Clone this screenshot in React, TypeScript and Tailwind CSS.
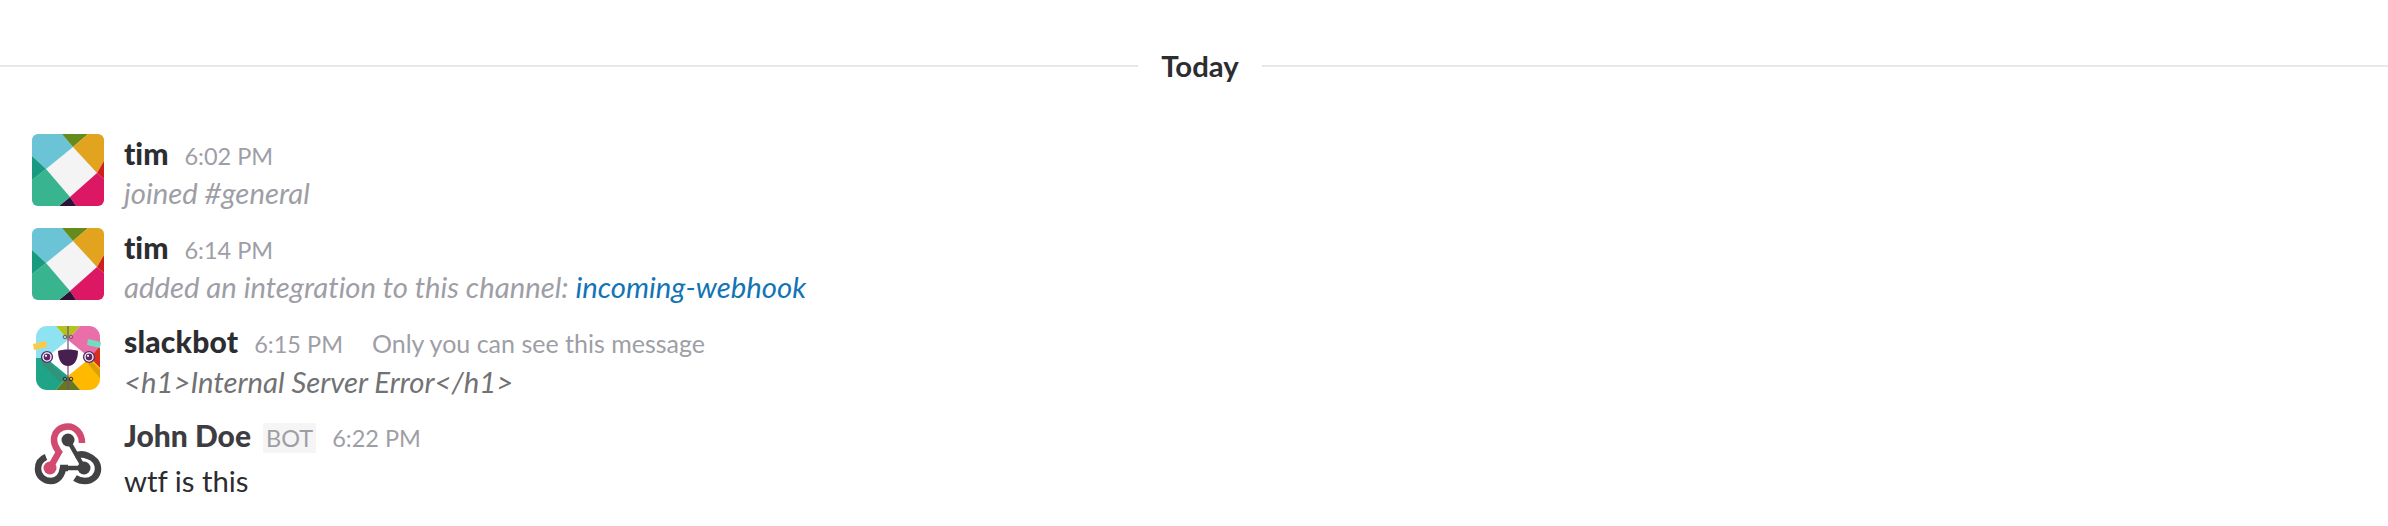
const SOFT_INK = "text-[#2c2d30]";

function TimAvatar() {
  return (
    <svg width="72" height="72" viewBox="0 0 72 72" className="block rounded-[6px]">
      <rect width="72" height="72" fill="#f4f4f5" />
      <polygon points="0,0 30,0 41,13 14,35 0,22" fill="#6ac4d6" />
      <polygon points="30,0 56,0 41,13" fill="#648b1c" />
      <polygon points="56,0 72,0 72,27 65,39 41,13" fill="#e2a41f" />
      <polygon points="72,27 65,39 72,45" fill="#cf1e1e" />
      <polygon points="65,39 72,45 72,72 44,72 38,63" fill="#dc1763" />
      <polygon points="38,63 44,72 27,72" fill="#2d1137" />
      <polygon points="14,35 38,63 27,72 0,72 0,46" fill="#38b48e" />
      <polygon points="0,22 14,35 0,46" fill="#189a80" />
    </svg>
  );
}

function SlackbotAvatar() {
  return (
    <svg width="72" height="72" viewBox="0 0 72 72" className="block">
      <defs>
        <clipPath id="sb">
          <rect x="4" y="4" width="64" height="64" rx="11" />
        </clipPath>
      </defs>
      <g clipPath="url(#sb)">
        <rect x="4" y="4" width="64" height="64" fill="#ffffff" />
        <polygon points="4,4 24,4 36,18 14,36 4,36" fill="#8de3f2" />
        <polygon points="24,4 48,4 36,18" fill="#b2c31c" />
        <polygon points="48,4 68,4 68,26 58,36 36,18" fill="#ea6fa8" />
        <polygon points="68,24 58,36 68,46" fill="#d9301e" />
        <polygon points="58,36 68,46 68,68 48,68 36,54" fill="#ffb900" />
        <polygon points="36,54 48,68 24,68" fill="#67781f" />
        <polygon points="14,36 36,54 24,68 4,68 4,36" fill="#1fa487" />
        <polygon points="14,38 34,56 28,60 10,42" fill="#4a7f6c" opacity="0.45" />
        <polygon points="58,38 68,48 68,56 56,42" fill="#a37a14" opacity="0.4" />
      </g>
      <rect x="35.4" y="4" width="1.2" height="64" fill="#7a4a86" />
      <circle cx="33" cy="15" r="1.8" fill="none" stroke="#7a4a86" strokeWidth="1" />
      <circle cx="39" cy="15" r="1.8" fill="none" stroke="#7a4a86" strokeWidth="1" />
      <circle cx="33" cy="57" r="1.8" fill="none" stroke="#2f2a44" strokeWidth="1" />
      <circle cx="39" cy="57" r="1.8" fill="none" stroke="#2f2a44" strokeWidth="1" />
      <path d="M26 29 C31 27 41 27 46 29 C46 38 42 44 36 44 C30 44 26 38 26 29 Z" fill="#47204f" />
      <circle cx="15" cy="35" r="5.4" fill="#ffffff" stroke="#5a2a66" strokeWidth="1.4" />
      <circle cx="15" cy="35" r="3.4" fill="#5a2a66" />
      <circle cx="14" cy="33.8" r="1.1" fill="#ffffff" />
      <circle cx="57" cy="35" r="5.4" fill="#ffffff" stroke="#5a2a66" strokeWidth="1.4" />
      <circle cx="57" cy="35" r="3.4" fill="#5a2a66" />
      <circle cx="56" cy="33.8" r="1.1" fill="#ffffff" />
      <polygon points="1,22 14,19 15,25 2,28" fill="#fdc94a" />
      <polygon points="56,17 69,20 68,26 55,23" fill="#72dcc0" />
    </svg>
  );
}

function WebhookAvatar() {
  return (
    <svg width="72" height="72" viewBox="0 0 72 72" className="block" fill="none">
      <path d="M36 24 L52 52" stroke="#424245" strokeWidth="4.5" />
      <path d="M30 52 L52 52" stroke="#424245" strokeWidth="4.5" />
      <circle cx="36" cy="24" r="6.5" fill="#424245" />
      <circle cx="52" cy="52" r="6.5" fill="#424245" />
      <path d="M50 27 C50 17 43 10.5 36 10.5 C28 10.5 22 16 22 24 C22 30 25 33 27 36 L18 52" stroke="#d14a70" strokeWidth="6.5" />
      <circle cx="18" cy="52" r="6.5" fill="#d14a70" />
      <path d="M14 41 C9 43 6 47 6 53 C6 60 12 65 19 65 C26 65 30 59 31 52 L36 52" stroke="#424245" strokeWidth="6.5" />
      <path d="M43 40 C47 38 52 38 56 40 C62 42 66 47 66 53 C66 60 60 65 53 65 C49 65 46 64 43 62" stroke="#424245" strokeWidth="6.5" />
    </svg>
  );
}

function Message({
  avatar,
  name,
  nameColor = SOFT_INK,
  nameExtra = "",
  time,
  tag,
  note,
  bodyTop = "",
  children,
}: {
  avatar: React.ReactNode;
  name: string;
  nameColor?: string;
  nameExtra?: string;
  time: string;
  tag?: string;
  note?: string;
  bodyTop?: string;
  children: React.ReactNode;
}) {
  return (
    <div className="flex h-[94px] [font-variant-ligatures:none]">
      <div className="w-[124px] shrink-0 pl-[32px]">{avatar}</div>
      <div className="min-w-0">
        <div className="-mt-[1px] flex h-[41px] items-baseline">
          <span className={`text-[30px] font-black leading-[40px] ${nameColor} ${nameExtra}`}>{name}</span>
          {tag && (
            <span className="ml-[12px] bg-[#f5f5f5] px-[3px] text-[23.5px] leading-[30px] text-[#9e9ea6]">
              {tag}
            </span>
          )}
          <span className="ml-[16px] text-[23.5px] leading-[40px] text-[#9e9ea6]">{time}</span>
          {note && <span className="ml-[29px] text-[25px] leading-[40px] text-[#9e9ea6]">{note}</span>}
        </div>
        <div className={`text-[29.3px] leading-[38px] ${bodyTop}`}>{children}</div>
      </div>
    </div>
  );
}

export default function App() {
  return (
    <div className="h-[526px] w-[2388px] overflow-hidden bg-white font-[Lato,sans-serif]">
      <div className="flex h-[134px] items-start pt-[44px]">
        <div className="mt-[21px] h-[2px] w-[1138px] bg-[#e8e8e8]" />
        <div className={`w-[124px] text-center text-[29.3px] font-bold leading-[44px] ${SOFT_INK}`}>Today</div>
        <div className="mt-[21px] h-[2px] flex-1 bg-[#e8e8e8]" />
      </div>
      <Message avatar={<TimAvatar />} name="tim" time="6:02 PM">
        <span className="italic text-[#9e9ea6]">joined #general</span>
      </Message>
      <Message avatar={<TimAvatar />} name="tim" time="6:14 PM">
        <span className="italic text-[#9e9ea6]">
          added an integration to this channel: <a className="text-[#1274b5]">incoming-webhook</a>
        </span>
      </Message>
      <Message
        avatar={<SlackbotAvatar />}
        name="slackbot"
        nameExtra="tracking-[0.2px]"
        time="6:15 PM"
        note="Only you can see this message"
        bodyTop="pt-[1px]"
      >
        <span className="italic text-[#717274]">&lt;h1&gt;Internal Server Error&lt;/h1&gt;</span>
      </Message>
      <Message avatar={<WebhookAvatar />} name="John Doe" nameColor="text-[#3d3c40]" time="6:22 PM" tag="BOT" bodyTop="pt-[6px]">
        <span className={SOFT_INK}>wtf is this</span>
      </Message>
    </div>
  );
}
